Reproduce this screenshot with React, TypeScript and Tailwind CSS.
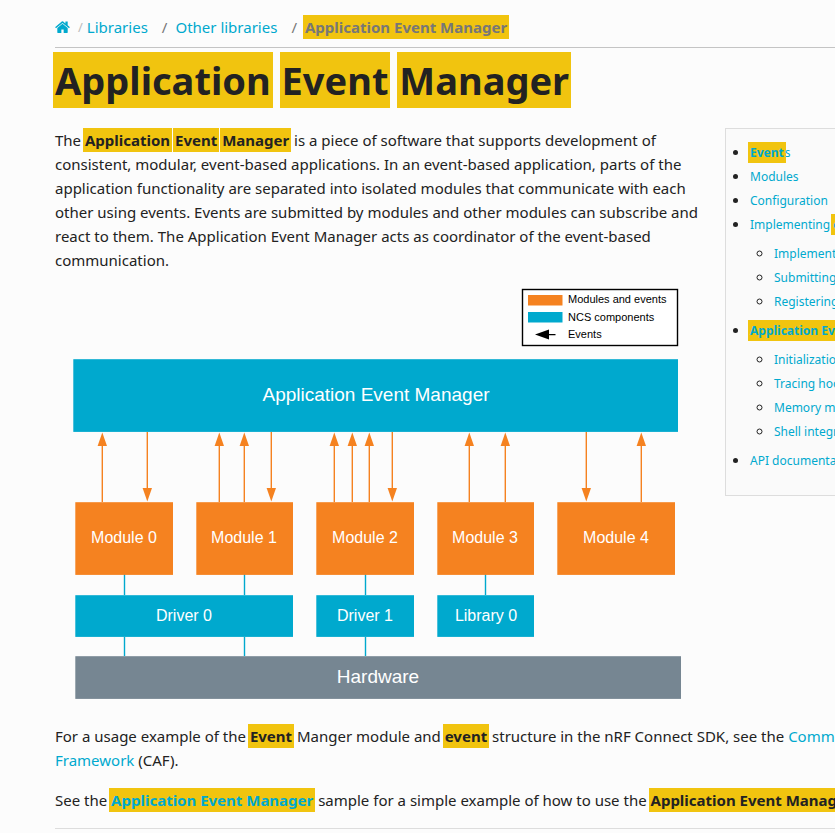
import type { ReactNode } from "react";

type TocItem = { id: string; label: ReactNode; children?: TocItem[] };

function Mark({ children }: { children: ReactNode }) {
  return <mark className="-mr-[1px] -ml-[2px] bg-[#f1c40f] p-[2px] font-bold text-inherit">{children}</mark>;
}

function Link({ children }: { children: ReactNode }) {
  return (
    <a href="#" className="text-[#00a9ce]">
      {children}
    </a>
  );
}

const toc: TocItem[] = [
  { id: "events", label: <><Mark>Event</Mark>s</> },
  { id: "modules", label: "Modules" },
  { id: "configuration", label: "Configuration" },
  {
    id: "implementing",
    label: <>Implementing <Mark>event</Mark>s</>,
    children: [
      { id: "types", label: "Implementing types" },
      { id: "submitting", label: "Submitting" },
      { id: "registering", label: "Registering module" },
    ],
  },
  {
    id: "extensions",
    label: <Mark>Application Event Manager</Mark>,
    children: [
      { id: "init", label: "Initialization hook" },
      { id: "tracing", label: "Tracing hooks" },
      { id: "memory", label: "Memory management" },
      { id: "shell", label: "Shell integration" },
    ],
  },
  { id: "api", label: "API documentation" },
];

function Toc() {
  return (
    <nav
      aria-label="Contents"
      className="float-right ml-6 w-[230px] border border-[#dddddd] bg-[#fafafa] pt-[10px] pb-6 text-[15px]"
    >
      <ul className="ml-6 list-disc leading-6 whitespace-nowrap">
        {toc.map((item) => (
          <li key={item.id}>
            <span className="text-[12px] leading-none">
              <Link>{item.label}</Link>
            </span>
            {item.children && (
              <ul className="my-[5px] ml-6 list-[circle]">
                {item.children.map((child) => (
                  <li key={child.id}>
                    <span className="text-[12px] leading-none">
                      <Link>{child.label}</Link>
                    </span>
                  </li>
                ))}
              </ul>
            )}
          </li>
        ))}
      </ul>
    </nav>
  );
}

function HomeIcon() {
  return (
    <svg viewBox="0 0 1664 1312" className="h-[12px] w-[15px] fill-[#00a9ce]" aria-hidden="true">
      <path d="M1408 768v480q0 26-19 45t-45 19H960V928H704v384H320q-26 0-45-19t-19-45V768q0-1 .5-3t.5-3l575-474 575 474q1 2 1 6zm223-69l-62 74q-8 9-21 11h-3q-13 0-21-7L832 200 140 777q-12 8-24 7-13-2-21-11l-62-74q-8-10-7-23.500T37 654L756 55q32-26 76-26t76 26l244 204V64q0-14 9-23t23-9h192q14 0 23 9t9 23v408l219 182q10 8 11 21.500t-7 23.500z" />
    </svg>
  );
}

const upArrows = [102, 219, 244, 334, 352, 369, 469, 505, 641];
const downArrows = [147, 271, 392, 586];
const connectors = [
  [124, 574, 595],
  [244, 574, 595],
  [365, 574, 595],
  [485, 574, 595],
  [124, 637, 656],
  [244, 637, 656],
  [365, 637, 656],
];
const boxes = [
  { x: 73, y: 359, w: 605, h: 73, fill: "#00a9ce", label: "Application Event Manager", tx: 376, ty: 401, size: 19 },
  { x: 75, y: 502, w: 98, h: 73, fill: "#f58220", label: "Module 0", tx: 124, ty: 543, size: 16 },
  { x: 196, y: 502, w: 97, h: 73, fill: "#f58220", label: "Module 1", tx: 244, ty: 543, size: 16 },
  { x: 316, y: 502, w: 98, h: 73, fill: "#f58220", label: "Module 2", tx: 365, ty: 543, size: 16 },
  { x: 437, y: 502, w: 97, h: 73, fill: "#f58220", label: "Module 3", tx: 485, ty: 543, size: 16 },
  { x: 557, y: 502, w: 118, h: 73, fill: "#f58220", label: "Module 4", tx: 616, ty: 543, size: 16 },
  { x: 75, y: 595, w: 218, h: 42, fill: "#00a9ce", label: "Driver 0", tx: 184, ty: 621, size: 16 },
  { x: 316, y: 595, w: 98, h: 42, fill: "#00a9ce", label: "Driver 1", tx: 365, ty: 621, size: 16 },
  { x: 437, y: 595, w: 97, h: 42, fill: "#00a9ce", label: "Library 0", tx: 486, ty: 621, size: 16 },
  { x: 75, y: 656, w: 606, h: 43, fill: "#768692", label: "Hardware", tx: 378, ty: 683, size: 19 },
];

function ArchitectureDiagram() {
  return (
    <svg
      viewBox="55 288 646 412"
      className="block h-[412px] w-[646px] font-['Liberation_Sans',Arial,sans-serif]"
      role="img"
      aria-label="Architecture of the Application Event Manager"
    >
      <rect x="522.5" y="289.5" width="155" height="56" fill="#fff" stroke="#000" strokeWidth="1.400" />
      <rect x="528" y="295" width="34.500" height="10.500" fill="#f58220" />
      <rect x="528" y="312" width="34.500" height="10.500" fill="#00a9ce" />
      <path d="M535 334.500l14-5v10zM548 334h7.500v1.200h-7.500z" fill="#000" />
      <g fontSize="11" fill="#000">
        <text x="568" y="303">Modules and events</text>
        <text x="568" y="321">NCS components</text>
        <text x="568" y="338">Events</text>
      </g>
      <g stroke="#00a9ce" strokeWidth="1.400">
        {connectors.map(([x, y1, y2]) => (
          <line key={`${x}-${y1}`} x1={x + 0.5} x2={x + 0.5} y1={y1} y2={y2} />
        ))}
      </g>
      <g stroke="#f58220" strokeWidth="1.400" fill="#f58220">
        {upArrows.map((x) => (
          <g key={x}>
            <line x1={x + 0.3} x2={x + 0.3} y1="440" y2="502" />
            <path d={`M${x + 0.3} 432.500l4.700 13.500h-9.400z`} stroke="none" />
          </g>
        ))}
        {downArrows.map((x) => (
          <g key={x}>
            <line x1={x + 0.3} x2={x + 0.3} y1="432" y2="494" />
            <path d={`M${x + 0.3} 501.500l4.700 -13.500h-9.400z`} stroke="none" />
          </g>
        ))}
      </g>
      {boxes.map((b) => (
        <g key={b.label}>
          <rect x={b.x + 0.3} y={b.y + 0.200} width={b.w - 0.300} height={b.h - 0.300} fill={b.fill} />
          <text x={b.tx} y={b.ty} fontSize={b.size} textAnchor="middle" fill="#fff">
            {b.label}
          </text>
        </g>
      ))}
    </svg>
  );
}

export default function App() {
  return (
    <div className="min-h-screen overflow-hidden bg-[#fcfcfc] font-['Noto_Sans','Segoe_UI',sans-serif] text-[15px] leading-6 text-[#222222]">
      <main className="ml-[55px] w-full max-w-[960px] min-w-[900px] pt-[15px]">
        <nav aria-label="Breadcrumb" className="border-b border-[#c4c4c4] pb-2">
          <ol className="flex items-center">
            <li>
              <a href="#" aria-label="Home">
                <HomeIcon />
              </a>
            </li>
            <li className="ml-2 flex gap-1">
              <span className="text-[13px] text-[#bbbbbb]">/</span>
              <Link>Libraries</Link>
            </li>
            <li className="ml-[14px] flex gap-2">
              <span className="text-[#777777]">/</span>
              <Link>Other libraries</Link>
            </li>
            <li className="ml-[14px] flex gap-2 text-[#777777]">
              <span>/</span>
              <span><Mark>Application Event Manager</Mark></span>
            </li>
          </ol>
        </nav>
        <h1 className="pt-1 text-[38px] leading-[56px] font-bold">
          <Mark>Application</Mark> <Mark>Event</Mark> <Mark>Manager</Mark>
        </h1>
        <div className="mt-5">
          <Toc />
          <p>
            The <Mark>Application</Mark> <Mark>Event</Mark> <Mark>Manager</Mark> is a piece of software that supports
            development of consistent, modular, event-based applications. In an event-based application, parts of the
            application functionality are separated into isolated modules that communicate with each other using
            events. Events are submitted by modules and other modules can subscribe and react to them. The Application
            Event Manager acts as coordinator of the event-based communication.
          </p>
          <figure className="my-4">
            <ArchitectureDiagram />
          </figure>
          <p className="clear-both mt-6">
            For a usage example of the <Mark>Event</Mark> Manger module and <Mark>event</Mark> structure in the nRF
            Connect SDK, see the <Link>Common Application Framework</Link> (CAF).
          </p>
          <p className="mt-4">
            See the <Link><Mark>Application Event Manager</Mark></Link> sample for a simple example of how to use the{" "}
            <Mark>Application Event Manager</Mark>.
          </p>
        </div>
        <hr className="mt-4 border-[#dddddd]" />
      </main>
    </div>
  );
}
